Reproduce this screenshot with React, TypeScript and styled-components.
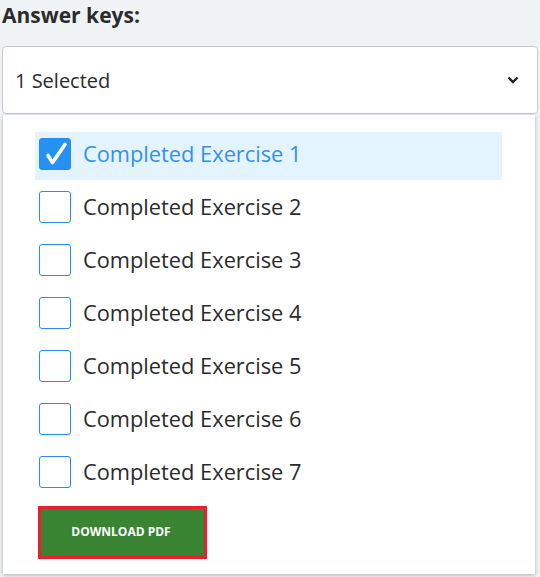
import React, { useState } from "react";
import styled, { createGlobalStyle } from "styled-components";

const Global = createGlobalStyle`
  html, body { margin: 0; padding: 0; background: #f0f3f6; }
  body { font-family: "Open Sans", "Noto Sans", sans-serif; color: #222; }
`;

const Page = styled.div`
  position: relative;
  width: 540px;
  height: 577px;
  overflow: hidden;
  padding: 0 2px;
  box-sizing: border-box;
`;

const Label = styled.div`
  font-size: 21px;
  font-weight: 700;
  line-height: 28px;
  padding-top: 1px;
  color: #2b2b2b;
`;

const Select = styled.div`
  margin-top: 17px;
  height: 68px;
  box-sizing: border-box;
  background: #fff;
  border: 1px solid #c6cacf;
  border-radius: 4px;
  display: flex;
  align-items: center;
  justify-content: space-between;
  padding: 0 18px 0 12px;
  font-size: 20px;
  color: #2b2b2b;
`;

const Panel = styled.div`
  position: absolute;
  top: 115px;
  left: 3px;
  width: 532px;
  height: 459px;
  box-sizing: border-box;
  background: #fff;
  box-shadow: 0 1px 4px rgba(0, 0, 0, 0.28);
  padding: 17px 33px 0 32px;
  display: flex;
  flex-direction: column;
`;

const List = styled.div`
  display: flex;
  flex-direction: column;
  gap: 5px;
`;

const Row = styled.label<{ $on: boolean }>`
  height: 48px;
  display: flex;
  align-items: center;
  gap: 12px;
  padding-left: 4px;
  border-radius: 2px;
  background: ${(p) => (p.$on ? "#e3f4fe" : "transparent")};
  color: ${(p) => (p.$on ? "#3590f3" : "#2b2b2b")};
  font-size: 21.8px;
  line-height: 30px;
  cursor: pointer;
  user-select: none;
  span { margin-top: -4px; }
`;

const Box = styled.span<{ $on: boolean }>`
  width: 32px;
  height: 32px;
  box-sizing: border-box;
  border: 1px solid #2a8cf2;
  border-radius: 3px;
  background: ${(p) => (p.$on ? "#2591f2" : "#fff")};
  display: flex;
  align-items: center;
  justify-content: center;
  flex: none;
`;

const Button = styled.button`
  margin-top: 8px;
  margin-left: 3px;
  width: 169px;
  height: 53px;
  box-sizing: border-box;
  border: 3px solid #e8202a;
  background: #388432;
  color: #fff;
  font-family: "Open Sans", sans-serif;
  font-weight: 700;
  font-size: 12px;
  padding: 0 3px 2px 0;
  cursor: pointer;
`;

const Chevron = () => (
  <svg width="12" height="8" viewBox="0 0 12 8">
    <path d="M1.5 1.5 L6 6 L10.5 1.5" fill="none" stroke="#1e2226" strokeWidth="2.4" />
  </svg>
);

const Check = () => (
  <svg width="32" height="32" viewBox="0 0 32 32" style={{ margin: -1 }}>
    <path d="M9 17.5 L13.5 24.5 L26 6.5" fill="none" stroke="#fff" strokeWidth="3.6" strokeLinecap="round" strokeLinejoin="round" />
  </svg>
);

export default function App() {
  const [sel, setSel] = useState<number[]>([1]);
  const items = [1, 2, 3, 4, 5, 6, 7];
  const toggle = (n: number) =>
    setSel((s) => (s.includes(n) ? s.filter((x) => x !== n) : [...s, n]));
  return (
    <>
      <Global />
      <Page>
        <Label>Answer keys:</Label>
        <Select>
          <span>{sel.length} Selected</span>
          <Chevron />
        </Select>
        <Panel>
          <List>
            {items.map((n) => {
              const on = sel.includes(n);
              return (
                <Row key={n} $on={on} onClick={() => toggle(n)}>
                  <Box $on={on}>{on && <Check />}</Box>
                  <span>Completed Exercise {n}</span>
                </Row>
              );
            })}
          </List>
          <Button>DOWNLOAD PDF</Button>
        </Panel>
      </Page>
    </>
  );
}
